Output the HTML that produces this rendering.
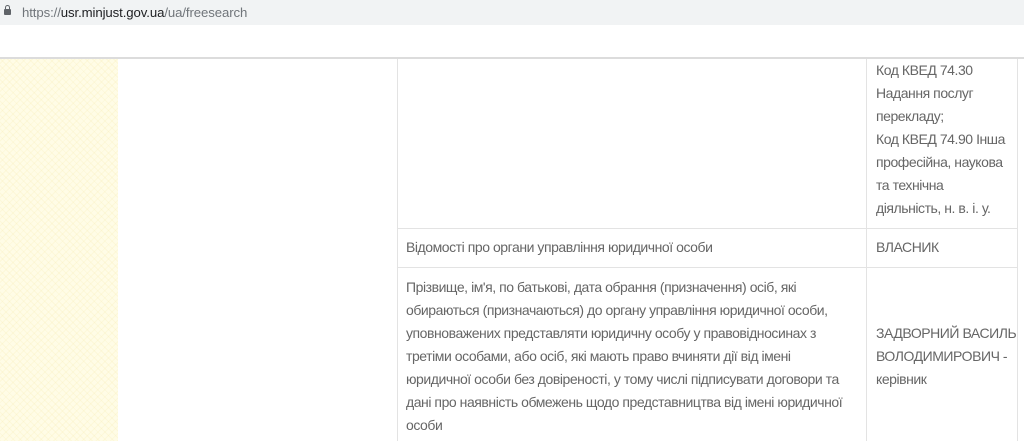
<!DOCTYPE html>
<html><head><meta charset="utf-8"><style>
*{margin:0;padding:0;box-sizing:border-box}
body{width:1024px;height:441px;overflow:hidden;background:#fff;font-family:"Liberation Sans",sans-serif;position:relative}
.bar{position:absolute;left:0;top:0;width:1024px;height:25px;background:#f1f3f4}
.url{position:absolute;left:22px;top:5px;font-size:13.2px;color:#70757a;letter-spacing:-0.1px}
.url b{font-weight:normal;color:#202124}
.lock{position:absolute;left:4px;top:9px;width:7px;height:6px;background:#5f6368;border-radius:1px}
.lock:before{content:"";position:absolute;left:1px;top:-4px;width:3px;height:4px;border:1px solid #5f6368;border-bottom:none;border-radius:3px 3px 0 0}
.sep{position:absolute;left:0;top:57px;width:1024px;height:2px;background:#dcdcdc}
.pat{position:absolute;left:0;top:59px;width:118px;height:382px;background-color:#fffce6;background-image:repeating-linear-gradient(45deg,rgba(245,232,170,.22) 0 1px,transparent 1px 5px),repeating-linear-gradient(-45deg,rgba(245,232,170,.22) 0 1px,transparent 1px 5px)}
.v{position:absolute;background:#e3e3e3;width:1px}
.h{position:absolute;background:#e3e3e3;height:1px;left:397px;width:621px}
.t{position:absolute;font-size:14px;line-height:23px;color:#666;letter-spacing:-0.45px}
</style></head><body>
<div class="bar"><div class="lock"></div><div class="url">https://<b>usr.minjust.gov.ua</b>/ua/freesearch</div></div>
<div class="sep"></div>
<div class="pat"></div>
<div class="v" style="left:397px;top:59px;height:382px"></div>
<div class="v" style="left:866px;top:59px;height:382px"></div>
<div class="v" style="left:1017px;top:59px;height:382px"></div>
<div class="h" style="top:228px"></div>
<div class="h" style="top:267px"></div>
<div class="t" style="left:876px;top:59px;width:140px">Код КВЕД 74.30<br>Надання послуг<br>перекладу;<br>Код КВЕД 74.90 Інша<br>професійна, наукова<br>та технічна<br>діяльність, н. в. і. у.</div>
<div class="t" style="left:406px;top:236px">Відомості про органи управління юридичної особи</div>
<div class="t" style="left:876px;top:236px">ВЛАСНИК</div>
<div class="t" style="left:406px;top:276px;white-space:nowrap">Прізвище, ім'я, по батькові, дата обрання (призначення) осіб, які<br>обираються (призначаються) до органу управління юридичної особи,<br>уповноважених представляти юридичну особу у правовідносинах з<br>третіми особами, або осіб, які мають право вчиняти дії від імені<br>юридичної особи без довіреності, у тому числі підписувати договори та<br>дані про наявність обмежень щодо представництва від імені юридичної<br>особи</div>
<div class="t" style="left:876px;top:322px;white-space:nowrap">ЗАДВОРНИЙ ВАСИЛЬ<br>ВОЛОДИМИРОВИЧ -<br>керівник</div>
</body></html>
